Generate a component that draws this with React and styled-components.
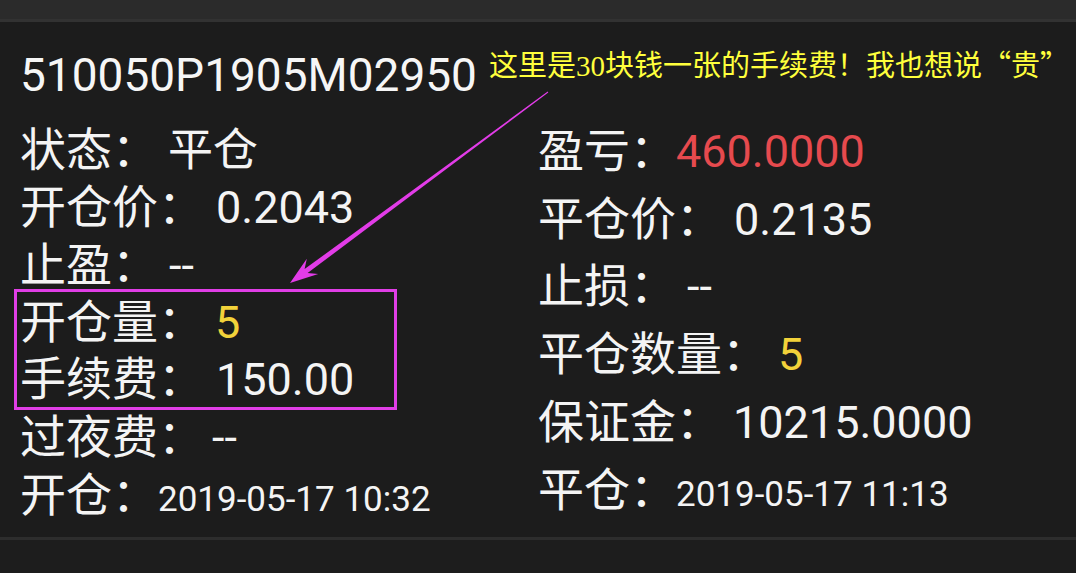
import styled, { createGlobalStyle } from "styled-components";

const GlobalStyle = createGlobalStyle`
  html, body {
    margin: 0;
    padding: 0;
    background-color: #1c1c1c;
  }
  body {
    font-family: "Roboto", "Noto Sans CJK SC", sans-serif;
    color: #f4f4f4;
  }
`;

const leftRows = [
  { label: "状态：", value: "平仓", gap: 10 },
  { label: "开仓价：", value: "0.2043", gap: 12 },
  { label: "止盈：", value: "--", gap: 11 },
  { label: "开仓量：", value: "5", gap: 11, color: "#f2d23a", mark: "start" },
  { label: "手续费：", value: "150.00", gap: 12, mark: "end" },
  { label: "过夜费：", value: "--", gap: 8 },
  { label: "开仓：", value: "2019-05-17 10:32", gap: 0, small: true },
];

const rightRows = [
  { label: "盈亏：", value: "460.0000", gap: 0, color: "#e64a4e" },
  { label: "平仓价：", value: "0.2135", gap: 12 },
  { label: "止损：", value: "--", gap: 11 },
  { label: "平仓数量：", value: "5", gap: 10, color: "#f2d23a" },
  { label: "保证金：", value: "10215.0000", gap: 11 },
  { label: "平仓：", value: "2019-05-17 11:13", gap: 0, small: true },
];

function InfoRow({ row }) {
  return (
    <Row>
      <Line>
        <Label>{row.label}</Label>
        <Value gap={row.gap} color={row.color} small={row.small ? 1 : 0}>
          {row.value}
        </Value>
      </Line>
    </Row>
  );
}

function Arrow() {
  return (
    <ArrowSvg width="1076" height="573" viewBox="0 0 1076 573">
      <polygon
        points="548.3,92.4 307.6,273.1 318.2,273.9 290,283 306.8,258.8 304.6,269.1 547.7,91.6"
        fill="#e23ce8"
      />
    </ArrowSvg>
  );
}

export default function App() {
  const marked = leftRows.filter((r) => r.mark);
  const before = leftRows.slice(0, 3);
  const after = leftRows.slice(5);

  return (
    <Page>
      <GlobalStyle />
      <TopBar />
      <Card>
        <Header>
          <Title>510050P1905M02950</Title>
          <Note>
            这里是30块钱一张的手续费！我也想说<Quote>“贵”</Quote>
          </Note>
        </Header>
        <Columns>
          <Column>
            {before.map((row) => (
              <InfoRow key={row.label} row={row} />
            ))}
            <Highlight>
              {marked.map((row) => (
                <InfoRow key={row.label} row={row} />
              ))}
            </Highlight>
            {after.map((row) => (
              <InfoRow key={row.label} row={row} />
            ))}
          </Column>
          <Column shift={-4}>
            {rightRows.map((row) => (
              <InfoRow key={row.label} row={row} />
            ))}
          </Column>
        </Columns>
      </Card>
      <Footer />
      <Arrow />
    </Page>
  );
}

const Page = styled.div`
  position: relative;
  width: 1076px;
  height: 573px;
  overflow: hidden;
  background-color: #1c1c1c;
`;

const TopBar = styled.div`
  height: 19px;
  background-color: #2b2b2b;
  border-bottom: 3px solid #323232;
`;

const Card = styled.div`
  padding: 25px 0 0 20px;
`;

const Header = styled.div`
  display: flex;
  align-items: flex-start;
  gap: 12px;
`;

const Title = styled.div`
  font-family: "Roboto", sans-serif;
  font-size: 46px;
  line-height: 56px;
  color: #f6f6f6;
  white-space: nowrap;
`;

const Note = styled.div`
  font-family: "Liberation Serif", "Noto Sans CJK SC", serif;
  font-size: 29px;
  line-height: 32px;
  color: #ffff3c;
  white-space: nowrap;
`;

const Quote = styled.span`
  font-family: "Noto Sans CJK SC", sans-serif;
`;

const Columns = styled.div`
  display: grid;
  grid-template-columns: 518px 1fr;
  height: 402px;
  margin-top: 16px;
`;

const Column = styled.div`
  display: flex;
  flex-direction: column;
  margin-top: ${(props) => props.shift || 0}px;
`;

const Highlight = styled.div`
  position: relative;
  flex: 2;
  display: flex;
  flex-direction: column;
  &::before {
    content: "";
    position: absolute;
    left: -6px;
    top: -2px;
    width: 377px;
    bottom: -4px;
    border: 3px solid #e03ee6;
    pointer-events: none;
  }
`;

const Row = styled.div`
  flex: 1;
  display: flex;
  align-items: center;
`;

const Line = styled.div`
  display: flex;
  align-items: baseline;
  white-space: nowrap;
`;

const Label = styled.span`
  font-family: "Noto Sans CJK SC", sans-serif;
  font-size: 46px;
  line-height: 1;
  color: #f4f4f4;
`;

const Value = styled.span`
  margin-left: ${(props) => props.gap}px;
  font-family: "Roboto", "Noto Sans CJK SC", sans-serif;
  font-size: ${(props) => (props.small ? "35px" : "45px")};
  line-height: 1;
  color: ${(props) => props.color || "#f4f4f4"};
`;

const Footer = styled.div`
  margin-top: 16px;
  height: 40px;
  border-top: 3px solid #2d2d2d;
  background-color: #1d1d1d;
`;

const ArrowSvg = styled.svg`
  position: absolute;
  left: 0;
  top: 0;
  pointer-events: none;
`;
